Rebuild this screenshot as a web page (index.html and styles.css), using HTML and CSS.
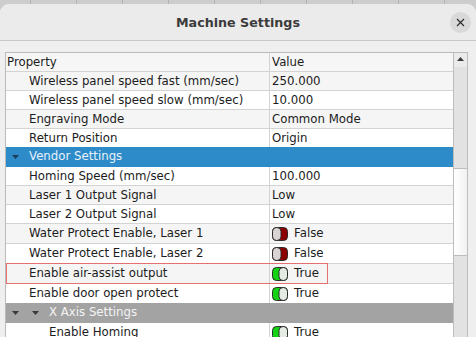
FILE: index.html
```html
<!DOCTYPE html>
<html>
<head>
<meta charset="utf-8">
<link rel="stylesheet" href="styles.css">
</head>
<body>
<div class="dialog">
  <header class="titlebar">
    <span></span>
    <h1 class="title">Machine Settings</h1>
    <button class="close" aria-label="Close">
      <svg width="9" height="9" viewBox="0 0 9 9"><path d="M1 1 L8 8 M8 1 L1 8" stroke="#2e2e2e" stroke-width="1.2" fill="none"/></svg>
    </button>
  </header>
  <main class="content">
    <div class="tree">
      <div class="rows">
        <div class="row header"><div class="c1">Property</div><div class="c2">Value</div></div>
        <div class="row alt"><div class="c1">Wireless panel speed fast (mm/sec)</div><div class="c2">250.000</div></div>
        <div class="row"><div class="c1">Wireless panel speed slow (mm/sec)</div><div class="c2">10.000</div></div>
        <div class="row alt"><div class="c1">Engraving Mode</div><div class="c2">Common Mode</div></div>
        <div class="row"><div class="c1">Return Position</div><div class="c2">Origin</div></div>
        <div class="row group blue">
          <div class="gcell"><span class="twisty"><svg width="7" height="4" viewBox="0 0 7 4"><polygon points="0,0 7,0 3.5,4"/></svg></span>Vendor Settings</div>
        </div>
        <div class="row"><div class="c1">Homing Speed (mm/sec)</div><div class="c2">100.000</div></div>
        <div class="row alt"><div class="c1">Laser 1 Output Signal</div><div class="c2">Low</div></div>
        <div class="row"><div class="c1">Laser 2 Output Signal</div><div class="c2">Low</div></div>
        <div class="row alt tall"><div class="c1">Water Protect Enable, Laser 1</div><div class="c2">
          <svg class="toggle" width="16" height="14" viewBox="0 0 16 14"><rect x="0.5" y="0.5" width="15" height="13" rx="4" fill="#8c0000" stroke="#2b2b2b"/><rect x="0.5" y="0.5" width="8.5" height="13" rx="4" fill="#dad3d3" stroke="#2b2b2b"/></svg>False</div></div>
        <div class="row tall"><div class="c1">Water Protect Enable, Laser 2</div><div class="c2">
          <svg class="toggle" width="16" height="14" viewBox="0 0 16 14"><rect x="0.5" y="0.5" width="15" height="13" rx="4" fill="#8c0000" stroke="#2b2b2b"/><rect x="0.5" y="0.5" width="8.5" height="13" rx="4" fill="#dad3d3" stroke="#2b2b2b"/></svg>False</div></div>
        <div class="row alt tall flag"><div class="c1">Enable air-assist output</div><div class="c2">
          <svg class="toggle" width="16" height="14" viewBox="0 0 16 14"><rect x="0.5" y="0.5" width="15" height="13" rx="4" fill="#14d214" stroke="#2b2b2b"/><rect x="7" y="0.5" width="8.5" height="13" rx="4" fill="#e3ebe3" stroke="#2b2b2b"/></svg>True</div></div>
        <div class="row tall"><div class="c1">Enable door open protect</div><div class="c2">
          <svg class="toggle" width="16" height="14" viewBox="0 0 16 14"><rect x="0.5" y="0.5" width="15" height="13" rx="4" fill="#14d214" stroke="#2b2b2b"/><rect x="7" y="0.5" width="8.5" height="13" rx="4" fill="#e3ebe3" stroke="#2b2b2b"/></svg>True</div></div>
        <div class="row group gray">
          <div class="gcell"><span class="twisty"><svg width="7" height="4" viewBox="0 0 7 4"><polygon points="0,0 7,0 3.5,4"/></svg></span><span class="twisty"><svg width="7" height="4" viewBox="0 0 7 4"><polygon points="0,0 7,0 3.5,4"/></svg></span>X Axis Settings</div>
        </div>
        <div class="row tall"><div class="c1 l2">Enable Homing</div><div class="c2">
          <svg class="toggle" width="16" height="14" viewBox="0 0 16 14"><rect x="0.5" y="0.5" width="15" height="13" rx="4" fill="#14d214" stroke="#2b2b2b"/><rect x="7" y="0.5" width="8.5" height="13" rx="4" fill="#e3ebe3" stroke="#2b2b2b"/></svg>True</div></div>
      </div>
      <div class="scrollbar">
        <div class="sb-up"><svg width="7" height="4" viewBox="0 0 7 4"><polygon points="3.5,0 7,4 0,4" fill="#3a3a3a"/></svg></div>
        <div class="sb-track"><div class="sb-thumb"></div></div>
      </div>
    </div>
  </main>
</div>
</body>
</html>
```

FILE: styles.css
```css
html, body {
  margin: 0;
  padding: 0;
}

body {
  width: 476px;
  height: 337px;
  overflow: hidden;
  background: #cdcdcd repeating-linear-gradient(90deg, transparent 0 30px, #b3b3b3 30px 31px, transparent 31px 46px);
  font-family: "DejaVu Sans", sans-serif;
}

.dialog {
  margin-top: 4px;
  height: 333px;
  background: #efefef;
  border-radius: 9px 9px 0 0;
  overflow: hidden;
  display: flex;
  flex-direction: column;
}

.titlebar {
  height: 36px;
  flex: none;
  background: #ebebeb;
  border-bottom: 1px solid #c8c8c8;
  display: grid;
  grid-template-columns: 1fr auto 1fr;
  align-items: center;
}

.title {
  margin: 0;
  font-size: 12.7px;
  font-weight: bold;
  color: #3b3b3b;
  padding-top: 1px;
}

.close {
  justify-self: end;
  margin-right: 5px;
  margin-top: 1px;
  width: 21px;
  height: 21px;
  border: 0;
  border-radius: 50%;
  background: #d9d9d9;
  padding: 0;
  display: flex;
  align-items: center;
  justify-content: center;
}

.close svg {
  display: block;
}

.content {
  flex: 1;
  min-height: 0;
  padding: 11px 0 0 5px;
}

.tree {
  display: flex;
  width: 463px;
  height: 100%;
  box-sizing: border-box;
  border-top: 1px solid #bababa;
  border-left: 1px solid #bababa;
  background: #fff;
}

.rows {
  width: 447px;
  flex: none;
}

.row {
  position: relative;
  display: flex;
  height: 18px;
  line-height: 18px;
  font-size: 11.75px;
  color: #1c1c1c;
  background: #fff;
  border-bottom: 1px solid #d3d3d3;
}

.row.alt {
  background: #f5f5f5;
}

.row.header {
  background: #f6f6f6;
}

.row.tall {
  height: 19px;
  line-height: 19px;
}

.c1 {
  width: 264px;
  flex: none;
  box-sizing: border-box;
  border-right: 1px solid #d3d3d3;
  padding-left: 23px;
  white-space: nowrap;
  overflow: hidden;
}

.c1.l2 {
  padding-left: 43px;
}

.header .c1 {
  padding-left: 1px;
}

.c2 {
  flex: 1;
  padding-left: 2px;
  display: flex;
  align-items: center;
  gap: 6px;
  white-space: nowrap;
}

.toggle {
  display: block;
  flex: none;
}

.row.group {
  margin-top: -1px;
  height: 19px;
  line-height: 19px;
}

.row.blue {
  background: #2e8bc9;
  border-bottom-color: #2e8bc9;
  color: #e8f1fa;
}

.row.blue svg {
  fill: #1b3d5c;
}

.row.gray {
  background: #a3a3a3;
  border-bottom-color: #a3a3a3;
  color: #f4f4f4;
}

.row.gray svg {
  fill: #3a3a3a;
}

.gcell {
  display: flex;
  align-items: center;
  padding-left: 3px;
  white-space: nowrap;
}

.twisty {
  width: 20px;
  flex: none;
  display: flex;
  align-items: center;
}

.twisty svg {
  display: block;
  margin-left: 3px;
  margin-top: 1px;
}

.row.flag::after {
  content: "";
  position: absolute;
  left: 0;
  top: -1px;
  width: 322px;
  height: 21px;
  box-sizing: border-box;
  border: 1px solid #e67070;
  pointer-events: none;
}

.scrollbar {
  width: 15px;
  flex: none;
  box-sizing: border-box;
  border-left: 1px solid #bdbdbd;
  border-right: 1px solid #bdbdbd;
  background: #e2e2e2;
  display: flex;
  flex-direction: column;
}

.sb-up {
  height: 14px;
  flex: none;
  box-sizing: border-box;
  padding-top: 4px;
  background: #ebebeb;
  display: flex;
  justify-content: center;
}

.sb-up svg {
  display: block;
}

.sb-track {
  flex: 1;
}

.sb-thumb {
  margin-top: 101px;
  height: 88px;
  box-sizing: border-box;
  border-top: 1px solid #bdbdbd;
  border-bottom: 1px solid #bdbdbd;
  background: linear-gradient(90deg, #ffffff, #f1f1f1);
}
```
